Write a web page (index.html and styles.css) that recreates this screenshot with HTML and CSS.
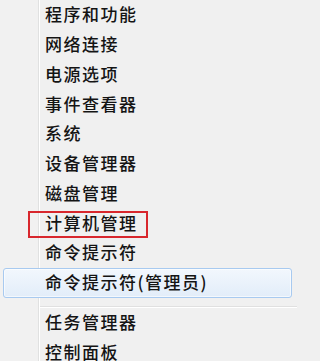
FILE: index.html
```html
<!DOCTYPE html>
<html lang="zh-CN">
<head>
<meta charset="utf-8">
<title>Menu</title>
<link rel="stylesheet" href="styles.css">
</head>
<body>
<div class="menu">
  <div class="item">程序和功能</div>
  <div class="item">网络连接</div>
  <div class="item">电源选项</div>
  <div class="item">事件查看器</div>
  <div class="item">系统</div>
  <div class="item">设备管理器</div>
  <div class="item">磁盘管理</div>
  <div class="item marked">计算机管理</div>
  <div class="item">命令提示符</div>
  <div class="item hover">命令提示符(管理员)</div>
  <div class="sep"></div>
  <div class="item">任务管理器</div>
  <div class="item">控制面板</div>
</div>
</body>
</html>
```

FILE: styles.css
```css
html, body {
  margin: 0;
  padding: 0;
  background: #f0f0f0;
}
body {
  width: 297px;
  height: 361px;
  overflow: hidden;
  font-family: "Noto Sans CJK SC", "Noto Sans", sans-serif;
  color: #141414;
}
.menu {
  display: flex;
  flex-direction: column;
  min-height: 361px;
  background: linear-gradient(to right, #f1f1f1 0, #f1f1f1 38px, #e0e1e1 38px, #e0e1e1 39px, #ffffff 39px, #ffffff 40px, #f0f0f0 40px);
}
.item {
  position: relative;
  box-sizing: border-box;
  height: 29.75px;
  flex: none;
  display: flex;
  align-items: center;
  padding-left: 45px;
  padding-bottom: 2px;
  font-size: 17px;
  font-weight: 500;
  letter-spacing: 1.5px;
  line-height: 1;
}
.item.hover {
  margin: 0 5px 0 3px;
  padding-left: 41px;
  border: 1px solid #a8caf0;
  border-radius: 3px;
  background: linear-gradient(to bottom, #f2f7fd, #e2edf9);
  box-shadow: inset 0 0 0 1px rgba(255,255,255,0.6);
}
.item.marked::after {
  content: "";
  position: absolute;
  left: 28px;
  top: 3px;
  width: 120px;
  height: 27px;
  box-sizing: border-box;
  border: 2px solid #d8272d;
}
.sep {
  flex: none;
  height: 10.5px;
  box-sizing: border-box;
  margin-left: 40px;
  border-bottom: 1px solid #ffffff;
  background: linear-gradient(to bottom, transparent 8px, #e0e0e0 8px, #e0e0e0 9px, transparent 9px);
}
```
